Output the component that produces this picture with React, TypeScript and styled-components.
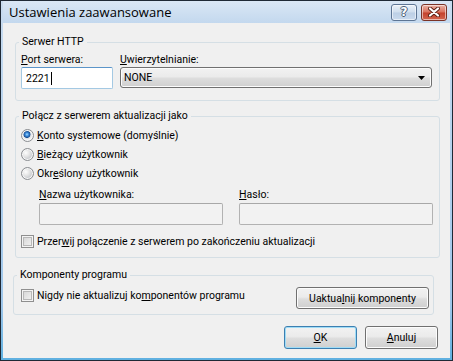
import styled, { createGlobalStyle } from "styled-components"

const font = `Roboto, "Liberation Sans", Arial, sans-serif`

const GlobalStyle = createGlobalStyle`
    html, body {
        margin: 0;
        padding: 0;
        background: #fff;
    }
    * {
        box-sizing: border-box;
    }
`

const Window = styled.div`
    width: 453px;
    height: 361px;
    display: flex;
    flex-direction: column;
    border: 1px solid #1f2935;
    padding: 0 2px 2px;
    background: linear-gradient(#c9dcf0, #9ec6ea 85%, #5fb0e0);
    font-family: ${font};
    font-size: 10.5px;
    color: #000;
`

const TitleBar = styled.div`
    height: 22px;
    flex: none;
    display: flex;
    align-items: center;
    padding: 0 3px 0 6px;
    background: linear-gradient(#dae7f5, #c3d8ee);
`

const Title = styled.span`
    font-family: "Open Sans", "Liberation Sans", sans-serif;
    font-size: 13px;
    color: #000;
`

const CaptionButtons = styled.div`
    margin-left: auto;
    display: flex;
    gap: 4px;
`

const CaptionButton = styled.div<{ $close?: boolean }>`
    width: 26px;
    height: 17px;
    display: flex;
    align-items: center;
    justify-content: center;
    border: 1px solid ${(p) => (p.$close ? "#7a3327" : "#5d7594")};
    border-radius: 3px;
    background: ${(p) =>
        p.$close
            ? "linear-gradient(#eab3a6, #d9705c 48%, #c4412c 52%, #d2654f)"
            : "linear-gradient(#eaf1f9, #cfdeee 48%, #bccfe5 52%, #c9daed)"};
    box-shadow: inset 0 0 0 1px rgba(255, 255, 255, 0.55);
    color: #fff;
    font-family: "DejaVu Sans", sans-serif;
    font-weight: bold;
    font-size: 12px;
    text-shadow: -1px 0 #4b5d75, 1px 0 #4b5d75, 0 -1px #4b5d75, 0 1px #4b5d75;
`

const Client = styled.div`
    flex: 1;
    display: flex;
    flex-direction: column;
    padding-top: 12px;
    background: #f0f0f0;
`

const Group = styled.fieldset<{ $left: number; $right: number; $top: number }>`
    margin: ${(p) => p.$top}px ${(p) => p.$right}px 0 ${(p) => p.$left}px;
    padding: 0 3px;
    min-width: 0;
    border: 1px solid #d5dfe5;
    border-radius: 3px;
`

const Legend = styled.legend`
    padding: 0 3px;
    line-height: 14px;
    font-size: 10.5px;
    color: #000;
`

const GroupBody = styled.div<{ $pad: string }>`
    padding: ${(p) => p.$pad};
`

const FieldGrid = styled.div<{ $cols: string; $gap: number }>`
    display: grid;
    grid-template-columns: ${(p) => p.$cols};
    column-gap: ${(p) => p.$gap}px;
    row-gap: 0;
    align-items: start;
`

const Label = styled.label`
    display: block;
    line-height: 14px;
    white-space: nowrap;
`

const Key = styled.u`
    text-decoration: underline;
    text-underline-offset: 1px;
`

const TextBox = styled.div<{ $focused?: boolean; $disabled?: boolean }>`
    height: 22px;
    display: flex;
    align-items: center;
    padding: 0 4px;
    border: 1px solid ${(p) => (p.$focused ? "#a4c9e3" : "#b2b2b2")};
    border-top-color: ${(p) => (p.$focused ? "#5b95c9" : "#a8a8a8")};
    border-radius: 2px;
    background: ${(p) => (p.$disabled ? "#f2f2f2" : "#fff")};
`

const Caret = styled.span`
    width: 1px;
    height: 13px;
    margin-left: 1px;
    background: #000;
`

const Combo = styled.div`
    height: 21px;
    display: flex;
    align-items: center;
    justify-content: space-between;
    padding: 0 6px 0 3px;
    border: 1px solid #707070;
    border-radius: 3px;
    background: linear-gradient(#f2f2f2, #ebebeb 45%, #dddddd 55%, #cfcfcf);
    box-shadow: inset 0 0 0 1px #fcfcfc;
`

const ChoiceList = styled.div`
    display: flex;
    flex-direction: column;
`

const ChoiceRow = styled.label<{ $top?: number }>`
    height: 19px;
    margin-top: ${(p) => p.$top ?? 0}px;
    display: flex;
    align-items: center;
    white-space: nowrap;
`

const Radio = styled.span<{ $checked?: boolean }>`
    width: 13px;
    height: 13px;
    flex: none;
    margin-right: 3px;
    border: 1px solid #8a8d91;
    border-radius: 50%;
    background: ${(p) =>
        p.$checked
            ? "radial-gradient(circle at 45% 40%, #a9dcff 0, #3d8ede 1.6px, #1b4f93 3.2px, #d9dde2 3.8px, #fafafa 6px)"
            : "radial-gradient(circle at 35% 35%, #fdfdfd 0, #e9e9e9 3px, #cfd1d4 6px)"};
    box-shadow: inset 0 0 0 1px #f6f6f6;
`

const CheckBox = styled.span`
    width: 13px;
    height: 13px;
    flex: none;
    margin-right: 3px;
    border: 1px solid #8f8f8f;
    background: linear-gradient(135deg, #d2d2d2, #f6f6f6);
    box-shadow: inset 0 0 0 1px #f4f4f4, inset 0 0 0 2px #b8b8b8;
`

const CredentialGrid = styled(FieldGrid)`
    margin: 5px 0 0 18px;
    row-gap: 1px;
`

const ComponentRow = styled.div`
    display: flex;
    justify-content: space-between;
    align-items: flex-start;
`

const Button = styled.button<{ $width: number; $height: number; $default?: boolean; $top?: number }>`
    width: ${(p) => p.$width}px;
    height: ${(p) => p.$height}px;
    margin-top: ${(p) => p.$top ?? 0}px;
    padding: 0;
    font-family: ${font};
    font-size: 10.5px;
    color: #000;
    border: 1px solid ${(p) => (p.$default ? "#3c7fb1" : "#707070")};
    border-radius: 3px;
    background: linear-gradient(#f2f2f2, #ebebeb 45%, #dddddd 55%, #cfcfcf);
    box-shadow: inset 0 0 0 1px ${(p) => (p.$default ? "#9fdcf6" : "#fcfcfc")};
`

const Footer = styled.div`
    display: flex;
    justify-content: flex-end;
    gap: 8px;
    margin-top: 11px;
    padding-right: 12px;
`

const ComboArrow = () => (
    <svg width="7" height="4" viewBox="0 0 7 4">
        <path d="M0 0h7L3.5 4z" fill="#000" />
    </svg>
)

const CloseGlyph = () => (
    <svg width="12" height="10" viewBox="0 0 12 10">
        <path d="M2 1.5l8 7M10 1.5l-8 7" stroke="#5a1f14" strokeWidth="4" strokeLinecap="round" />
        <path d="M2 1.5l8 7M10 1.5l-8 7" stroke="#fff" strokeWidth="2.2" strokeLinecap="round" />
    </svg>
)

export default function App() {
    return (
        <>
            <GlobalStyle />
            <Window>
                <TitleBar>
                    <Title>Ustawienia zaawansowane</Title>
                    <CaptionButtons>
                        <CaptionButton>?</CaptionButton>
                        <CaptionButton $close>
                            <CloseGlyph />
                        </CaptionButton>
                    </CaptionButtons>
                </TitleBar>
                <Client>
                    <Group $left={12} $right={10} $top={0}>
                        <Legend>Serwer HTTP</Legend>
                        <GroupBody $pad="4px 0 11px 2px">
                            <FieldGrid $cols="92px 312px" $gap={7}>
                                <Label>
                                    <Key>P</Key>ort serwera:
                                </Label>
                                <Label>
                                    <Key>U</Key>wierzytelnianie:
                                </Label>
                                <TextBox $focused>
                                    2221
                                    <Caret />
                                </TextBox>
                                <Combo>
                                    NONE
                                    <ComboArrow />
                                </Combo>
                            </FieldGrid>
                        </GroupBody>
                    </Group>

                    <Group $left={12} $right={10} $top={8}>
                        <Legend>Połącz z serwerem aktualizacji jako</Legend>
                        <GroupBody $pad="3px 0 6px 2px">
                            <ChoiceList>
                                <ChoiceRow>
                                    <Radio $checked />
                                    <span>
                                        <Key>K</Key>onto systemowe (domyślnie)
                                    </span>
                                </ChoiceRow>
                                <ChoiceRow>
                                    <Radio />
                                    <span>
                                        <Key>B</Key>ieżący użytkownik
                                    </span>
                                </ChoiceRow>
                                <ChoiceRow>
                                    <Radio />
                                    <span>
                                        Okr<Key>e</Key>ślony użytkownik
                                    </span>
                                </ChoiceRow>
                            </ChoiceList>
                            <CredentialGrid $cols="184px 194px" $gap={16}>
                                <Label>
                                    <Key>N</Key>azwa użytkownika:
                                </Label>
                                <Label>
                                    <Key>H</Key>asło:
                                </Label>
                                <TextBox $disabled />
                                <TextBox $disabled />
                            </CredentialGrid>
                            <ChoiceRow $top={7}>
                                <CheckBox />
                                <span>
                                    Przer<Key>w</Key>ij połączenie z serwerem po zakończeniu aktualizacji
                                </span>
                            </ChoiceRow>
                        </GroupBody>
                    </Group>

                    <Group $left={10} $right={16} $top={10}>
                        <Legend>Komponenty programu</Legend>
                        <GroupBody $pad="4px 1px 5px 4px">
                            <ComponentRow>
                                <ChoiceRow>
                                    <CheckBox />
                                    <span>
                                        Nigdy nie aktualizuj ko<Key>m</Key>ponentów programu
                                    </span>
                                </ChoiceRow>
                                <Button $width={133} $height={22} $top={1}>
                                    Uaktua<Key>l</Key>nij komponenty
                                </Button>
                            </ComponentRow>
                        </GroupBody>
                    </Group>

                    <Footer>
                        <Button $width={73} $height={23} $default>
                            <Key>O</Key>K
                        </Button>
                        <Button $width={73} $height={23}>
                            <Key>A</Key>nuluj
                        </Button>
                    </Footer>
                </Client>
            </Window>
        </>
    )
}
